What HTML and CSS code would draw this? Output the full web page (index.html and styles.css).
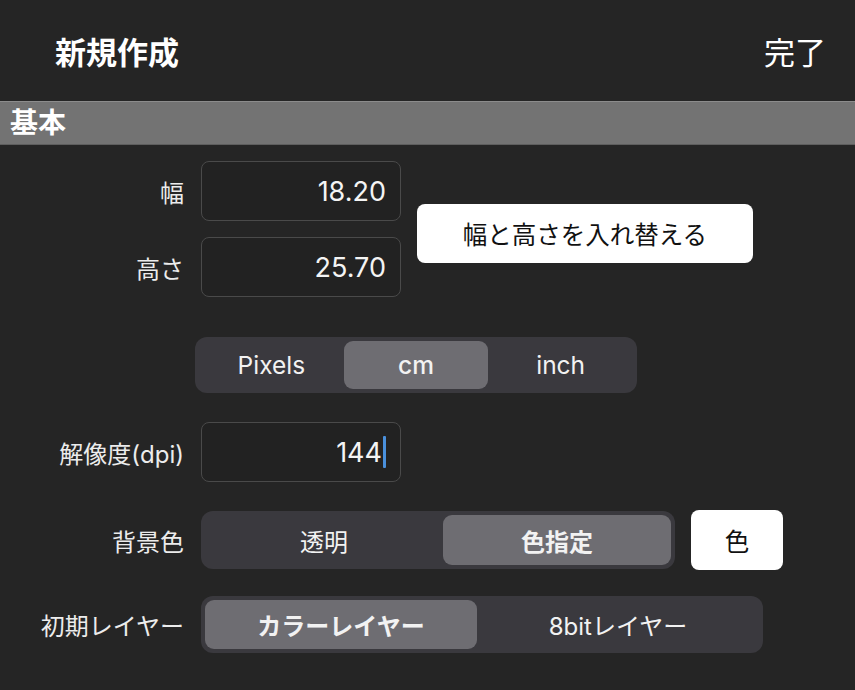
FILE: index.html
```html
<!DOCTYPE html>
<html lang="ja">
<head>
    <meta charset="UTF-8">
    <meta name="viewport" content="width=device-width, initial-scale=1.0">
    <title>新規作成</title>
    <link rel="stylesheet" href="styles.css">
</head>
<body>
    <header class="topbar">
        <h1>新規作成</h1>
        <span class="done">完了</span>
    </header>

    <div class="section">基本</div>

    <div class="form">
        <div class="size-group">
            <div class="fields">
                <div class="row">
                    <span class="label">幅</span>
                    <div class="field">18.20</div>
                </div>
                <div class="row">
                    <span class="label">高さ</span>
                    <div class="field">25.70</div>
                </div>
            </div>
            <button class="btn swap">幅と高さを入れ替える</button>
        </div>

        <div class="segmented units">
            <span class="seg">Pixels</span>
            <span class="seg selected">cm</span>
            <span class="seg">inch</span>
        </div>

        <div class="row dpi">
            <span class="label">解像度(dpi)</span>
            <div class="field">144<span class="caret"></span></div>
        </div>

        <div class="row bg">
            <span class="label">背景色</span>
            <div class="segmented bg-seg">
                <span class="seg">透明</span>
                <span class="seg selected">色指定</span>
            </div>
            <button class="btn color">色</button>
        </div>

        <div class="row layer">
            <span class="label">初期レイヤー</span>
            <div class="segmented layer-seg">
                <span class="seg selected">カラーレイヤー</span>
                <span class="seg">8bitレイヤー</span>
            </div>
        </div>
    </div>
</body>
</html>
```

FILE: styles.css
```css
body {
    margin: 0;
    background-color: #252525;
    color: #f2f2f2;
    font-family: Inter, "Noto Sans CJK JP", sans-serif;
}
.topbar {
    height: 101px;
    display: flex;
    align-items: center;
    justify-content: space-between;
    padding: 0 29px 0 55px;
    box-sizing: border-box;
}
.topbar h1 {
    margin: 0;
    font-size: 31px;
    font-weight: bold;
    color: #ffffff;
}
.done {
    font-size: 31px;
    color: #ffffff;
}
.section {
    height: 44px;
    box-sizing: border-box;
    border-top: 1px solid #8c8c8c;
    border-bottom: 1px solid #5e5e5e;
    background-color: #737373;
    color: #ffffff;
    font-size: 28px;
    font-weight: bold;
    line-height: 42px;
    padding-left: 10px;
}
.form {
    padding-top: 16px;
}
.size-group {
    display: flex;
    align-items: center;
}
.fields {
    display: flex;
    flex-direction: column;
    gap: 16px;
}
.row {
    display: flex;
    align-items: center;
    gap: 17px;
}
.label {
    width: 184px;
    text-align: right;
    font-size: 24px;
    color: #ececec;
}
.field {
    width: 200px;
    height: 60px;
    box-sizing: border-box;
    border: 1px solid #4a4a4a;
    border-radius: 8px;
    background-color: #222222;
    display: flex;
    align-items: center;
    justify-content: flex-end;
    padding-right: 14px;
    font-size: 27px;
    color: #f4f4f4;
}
.caret {
    display: inline-block;
    width: 3px;
    height: 32px;
    margin-left: 1px;
    background-color: #4a90dc;
    border-radius: 1px;
}
.btn {
    border: none;
    border-radius: 8px;
    background-color: #ffffff;
    color: #111111;
    font-family: Inter, "Noto Sans CJK JP", sans-serif;
    font-size: 24.5px;
    padding: 0;
    cursor: pointer;
}
.swap {
    width: 336px;
    height: 59px;
    margin-left: 16px;
    margin-top: 8px;
}
.segmented {
    display: grid;
    grid-template-columns: 1fr 1fr 1fr;
    padding: 4px;
    box-sizing: border-box;
    background-color: #3a393e;
    border-radius: 12px;
}
.seg {
    display: flex;
    align-items: center;
    justify-content: center;
    font-size: 24px;
    color: #f2f2f2;
    border-radius: 9px;
}
.seg.selected {
    background-color: #6e6d72;
    font-weight: bold;
}
.units .seg {
    font-size: 24.5px;
}
.units .seg.selected {
    font-weight: 500;
}
.units {
    width: 442px;
    height: 56px;
    margin: 40px 0 0 195px;
}
.dpi {
    margin-top: 29px;
}
.bg {
    margin-top: 28px;
    gap: 0;
}
.bg .label {
    margin-right: 17px;
}
.bg-seg {
    width: 474px;
    height: 58px;
    grid-template-columns: 1fr 228px;
}
.color {
    width: 92px;
    height: 60px;
    margin-left: 16px;
}
.layer {
    margin-top: 26px;
}
.layer-seg {
    width: 562px;
    height: 57px;
    grid-template-columns: 272px 1fr;
}
```
